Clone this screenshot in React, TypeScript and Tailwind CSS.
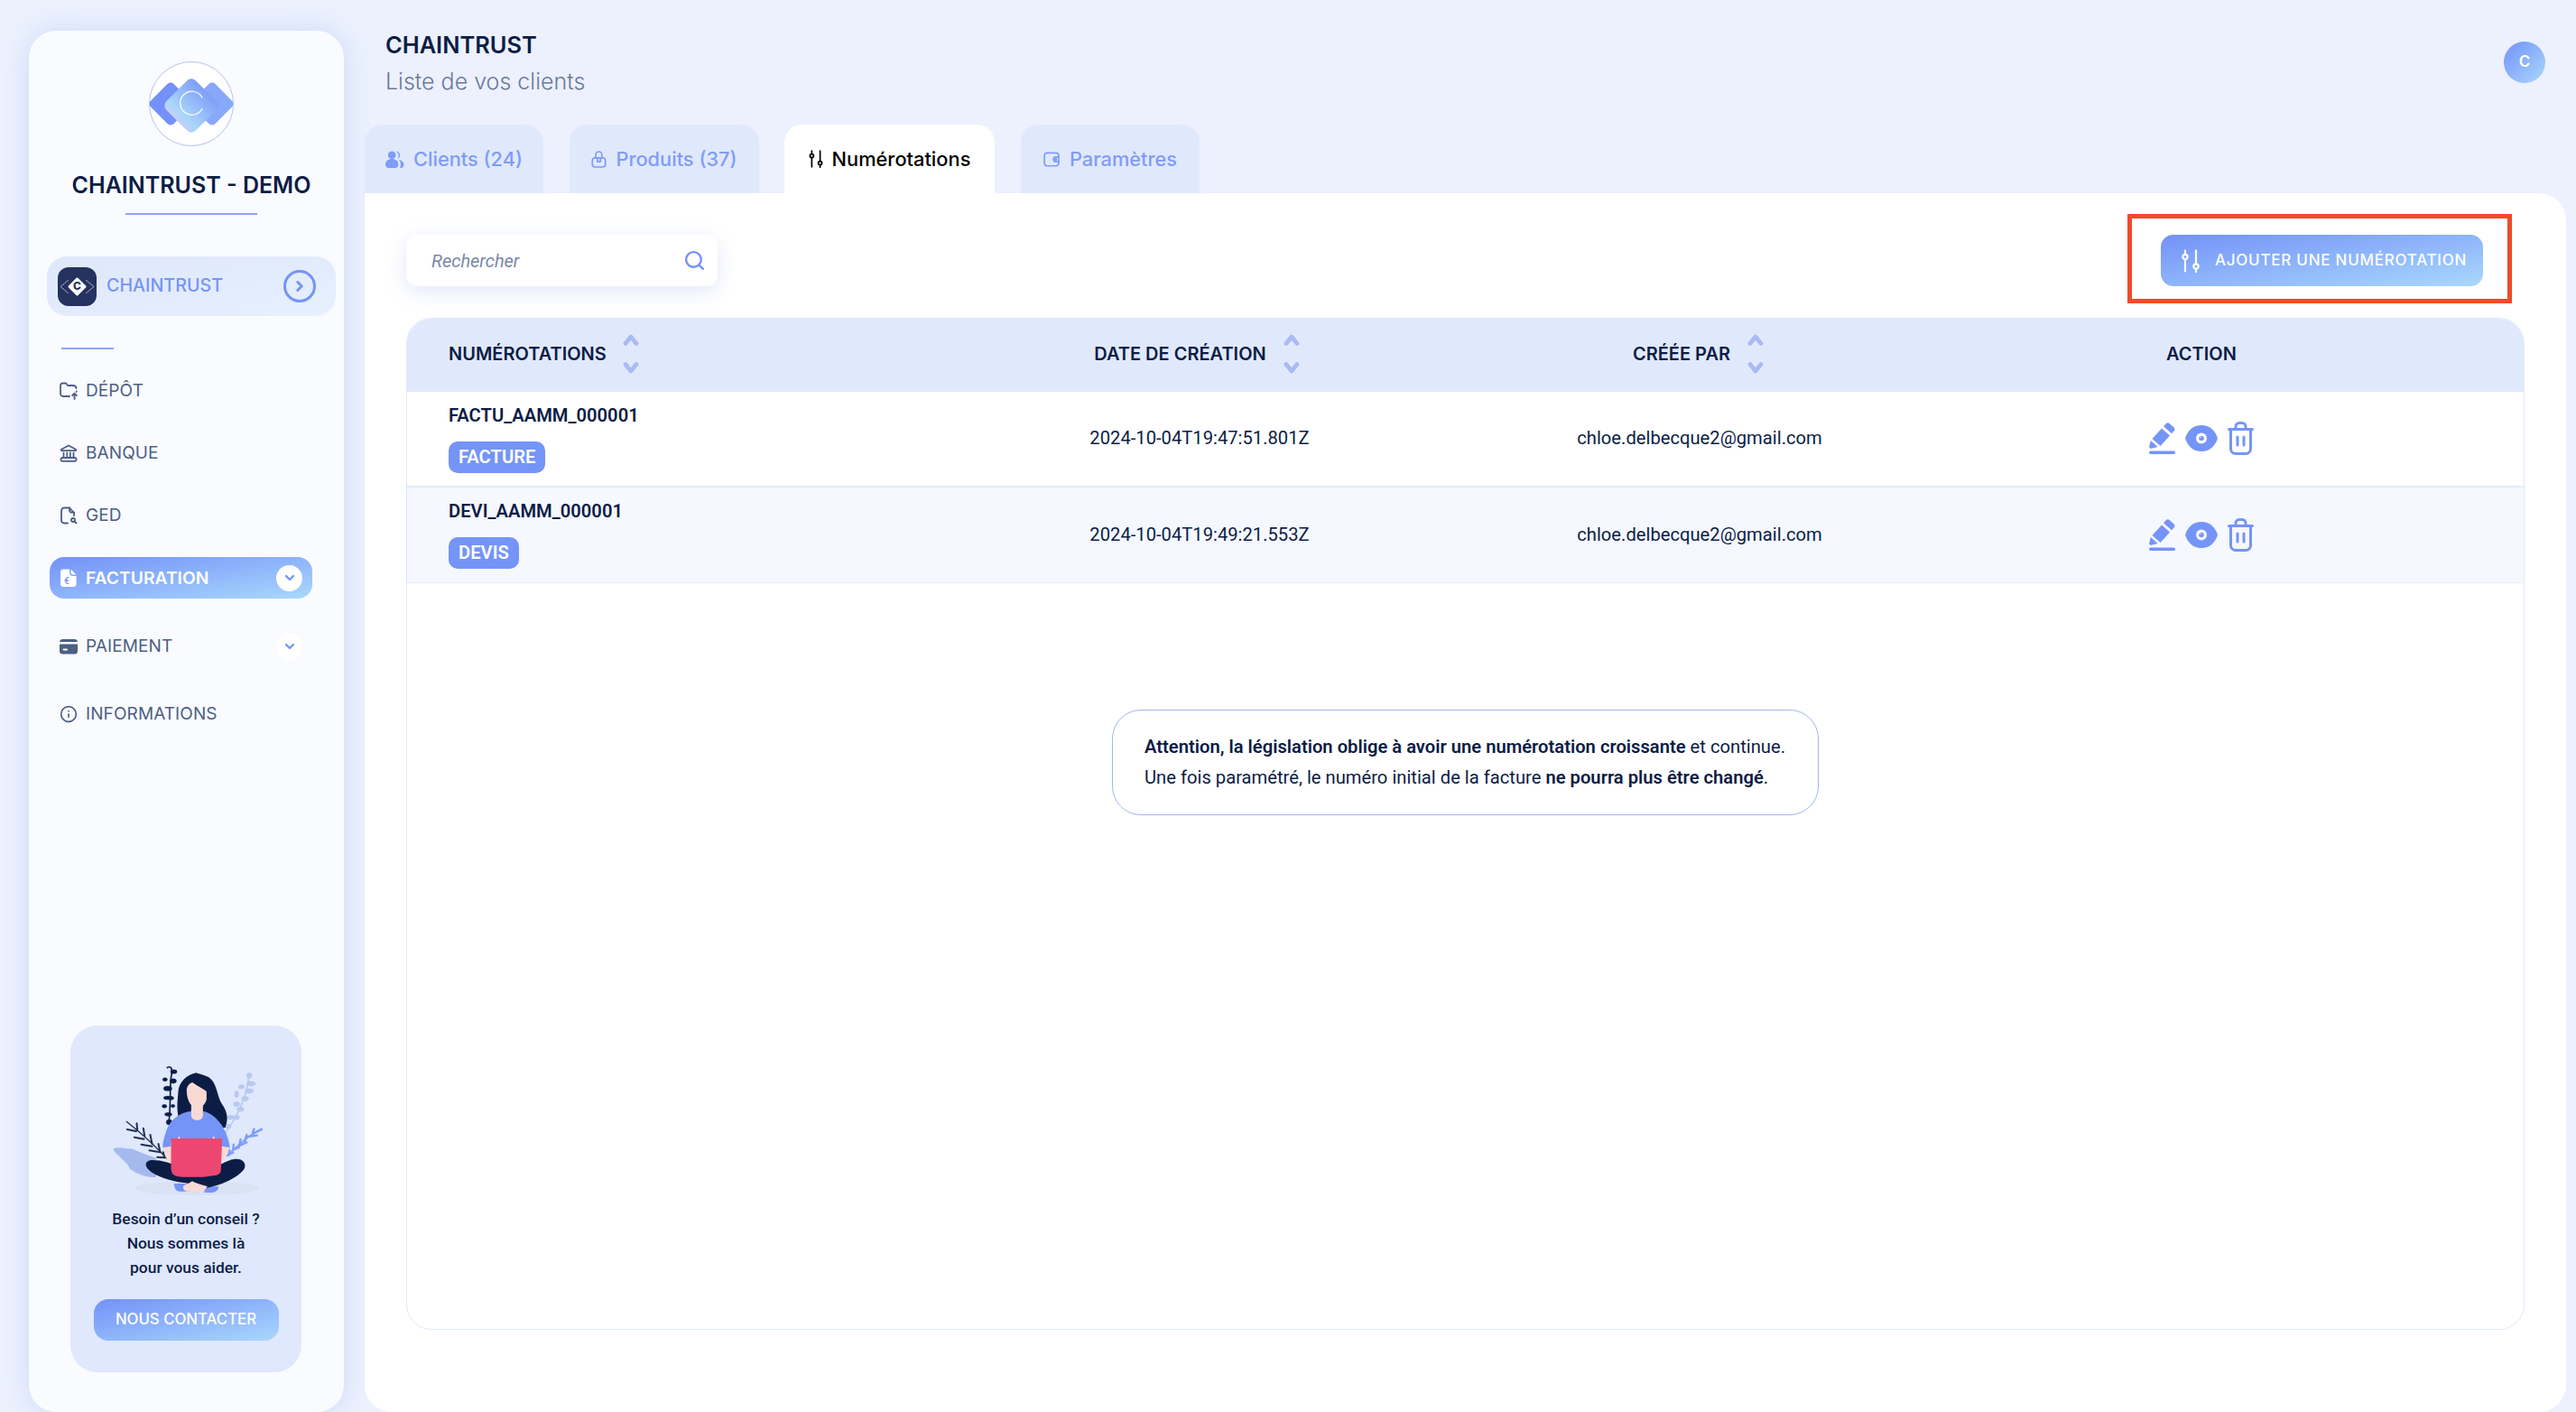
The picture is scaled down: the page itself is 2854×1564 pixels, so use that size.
import React from 'react';
import { ChevronRight, ChevronDown, Search, Info } from 'lucide-react';

const DISPLAY = "font-['Inter',sans-serif]";
const BODY = "font-['Roboto',sans-serif]";
const GRADIENT = 'bg-gradient-to-br from-[#7491f8] to-[#aad7fb]';

const SlidersIcon = ({ className }: { className?: string }) => (
  <svg viewBox="0 0 20 26" fill="none" stroke="currentColor" strokeLinecap="round" strokeWidth="2.2" className={className}>
    <path d="M4 1.500v4M4 11.500v13M16 1.500v15M16 22v3" />
    <circle cx="4" cy="8.500" r="2.600" />
    <circle cx="16" cy="19" r="2.600" />
  </svg>
);

const UsersIcon = ({ className }: { className?: string }) => (
  <svg viewBox="0 0 22 20" fill="currentColor" className={className}>
    <circle cx="7.500" cy="5" r="4.600" />
    <path d="M0 16c0-4 3-6.500 7.500-6.500S15 12 15 16c0 2.500-1.500 4-3.500 4h-8C1.500 20 0 18.500 0 16z" />
    <path d="M12.500.6a4.600 4.600 0 0 1 1.500 8.800 6 6 0 0 0-1.500-8.800zM15.500 10.500c3.500.5 6 2.500 6 5.800 0 2.200-1.200 3.700-3.500 3.700h-1.200c.7-1 1-2.400 1-4 0-2-.8-4-2.300-5.500z" />
  </svg>
);

const BoxIcon = ({ className }: { className?: string }) => (
  <svg viewBox="0 0 20 22" fill="none" stroke="currentColor" strokeWidth="2" strokeLinejoin="round" className={className}>
    <path d="M6 10V5a4 4 0 0 1 8 0v5" />
    <rect x="1.500" y="9" width="17" height="12" rx="3.500" />
    <path d="M8 9v5h4V9" />
  </svg>
);

const WalletIcon = ({ className }: { className?: string }) => (
  <svg viewBox="0 0 22 20" fill="none" stroke="currentColor" strokeWidth="2" className={className}>
    <rect x="1.200" y="1.500" width="18.500" height="17" rx="3.500" />
    <path d="M21 7h-5a3 3 0 0 0 0 6h5" />
    <circle cx="16" cy="10" r="1" fill="currentColor" />
  </svg>
);

const FolderIcon = () => (
  <svg viewBox="0 0 20 20" fill="none" stroke="currentColor" strokeWidth="1.800" strokeLinecap="round" strokeLinejoin="round" className="size-[20px]">
    <path d="M11 16H4a3 3 0 0 1-3-3V4a2.500 2.500 0 0 1 2.500-2.500H7l2 2.500h6a3.500 3.500 0 0 1 3.500 3.200" />
    <path d="M16.500 19v-6M14.200 15l2.300-2.300 2.300 2.300" />
    <path d="M18.700 10.500v.5" />
  </svg>
);

const BankIcon = () => (
  <svg viewBox="0 0 20 20" fill="none" stroke="currentColor" strokeWidth="1.800" strokeLinecap="round" strokeLinejoin="round" className="size-[20px]">
    <path d="M2 5.800 10 1.500l8 4.300v1.400H2z" />
    <path d="M4.500 9.500v5M8.300 9.500v5M11.800 9.500v5M15.500 9.500v5" />
    <rect x="1.500" y="15" width="17" height="3.800" rx="1.800" />
  </svg>
);

const FileSearchIcon = () => (
  <svg viewBox="0 0 20 20" fill="none" stroke="currentColor" strokeWidth="1.800" strokeLinecap="round" strokeLinejoin="round" className="size-[20px]">
    <path d="M9 18.500H5a3 3 0 0 1-3-3v-11a3 3 0 0 1 3-3h6l5 5.500v3" />
    <path d="M11 1.500v3a2 2 0 0 0 2 2h3" />
    <circle cx="15" cy="15" r="2" />
    <path d="m16.500 16.500 2 2" />
  </svg>
);

const InvoiceIcon = () => (
  <svg viewBox="0 0 18 20" className="h-[20px] w-[18px]">
    <path d="M3 .5h7V4a4 4 0 0 0 4 4h3.500v9a3 3 0 0 1-3 3H3a3 3 0 0 1-3-3V3.500a3 3 0 0 1 3-3z" fill="#fff" />
    <path d="M11.500.5 17.500 6.500H14a2.500 2.500 0 0 1-2.500-2.500z" fill="#fff" />
    <text x="4" y="17" fontSize="10" fontWeight="700" fill="#7f9df8" fontFamily="Roboto, sans-serif">€</text>
  </svg>
);

const CardIcon = () => (
  <svg viewBox="0 0 20 17" fill="#4d5f83" className="h-[17px] w-[20px]">
    <path d="M3.500 0h13A3.500 3.500 0 0 1 20 3H0A3.500 3.500 0 0 1 3.500 0z" />
    <path d="M0 5.500h20V13a3.500 3.500 0 0 1-3.500 3.500h-13A3.500 3.500 0 0 1 0 13z" />
    <rect x="3.500" y="10.500" width="5.500" height="2" rx="1" fill="#f9fbff" />
  </svg>
);

const PencilIcon = () => (
  <svg viewBox="0 0 29 37" fill="#7594f7" className="h-[37px] w-[29px]">
    <path d="M18.500 2.500a3 3 0 0 1 4.300-.2l4.500 4a3 3 0 0 1 .2 4.200l-2.500 2.800-9-8z" />
    <path d="M14 7.500l9 8-10.500 11.500-9-8z" />
    <path d="M1.800 21l7.800 7-7 1.700C1 30 0 29 .2 27.500z" />
    <rect x="0" y="32.500" width="29" height="3.500" rx="1.700" />
  </svg>
);

const EyeIcon = ({ bg }: { bg: string }) => (
  <svg viewBox="0 0 36 29" className="h-[29px] w-[36px]">
    <path d="M18 0c9 0 15.500 6 18 14.500C33.500 23 27 29 18 29S2.500 23 0 14.500C2.500 6 9 0 18 0z" fill="#7594f7" />
    <circle cx="18" cy="14.500" r="6" fill={bg} />
    <circle cx="18" cy="14.500" r="2.800" fill="#7594f7" />
    <circle cx="16.800" cy="13.300" r=".8" fill={bg} />
  </svg>
);

const TrashIcon = () => (
  <svg viewBox="0 0 29 37" fill="none" stroke="#7594f7" strokeWidth="3" strokeLinecap="round" strokeLinejoin="round" className="h-[37px] w-[29px]">
    <path d="M1.500 8.500h26" />
    <path d="M9 8V5.500a4 4 0 0 1 4-4h3a4 4 0 0 1 4 4V8" />
    <path d="M3.500 9v21a5.500 5.500 0 0 0 5.500 5.500h11a5.500 5.500 0 0 0 5.500-5.500V9" />
    <path d="M11 17v9M18 17v9" />
  </svg>
);

const SortArrows = () => (
  <svg viewBox="0 0 18 46" fill="none" stroke="#a9bbf0" strokeWidth="4.800" strokeLinecap="round" strokeLinejoin="round" className="h-[46px] w-[18px]">
    <path d="M3 11.500 9 4l6 7.500M3 34.500 9 42l6-7.500" />
  </svg>
);

const ChainTrustLogo = () => (
  <svg viewBox="0 0 94 94" className="size-[94px]">
    <defs>
      <linearGradient id="logoCenter" x1="0" y1="0" x2="0" y2="1">
        <stop offset="0" stopColor="#7f9ef8" />
        <stop offset="0.8" stopColor="#a9d6fb" />
        <stop offset="1" stopColor="#c3cff8" />
      </linearGradient>
    </defs>
    <circle cx="47" cy="47" r="46.500" fill="#fff" stroke="#9db2ee" strokeWidth="0.8" />
    <rect x="6" y="29" width="36" height="36" rx="5" transform="rotate(45 24 47)" fill="#7391f8" />
    <rect x="52" y="29" width="36" height="36" rx="5" transform="rotate(45 70 47)" fill="#88a8f9" />
    <rect x="24" y="26" width="46" height="46" rx="7" transform="rotate(45 47 49)" fill="url(#logoCenter)" />
    <path d="M59 40a13 13 0 1 0 0 12.500" fill="none" stroke="#fff" strokeWidth="1.200" strokeLinecap="round" />
  </svg>
);

const SmallLogo = () => (
  <div className="relative flex size-[43px] shrink-0 items-center justify-center rounded-[12px] bg-[#25315f]">
    <svg viewBox="0 0 43 43" className="absolute inset-0 size-[43px]">
      <path d="M12 14 3 21.500 12 29M31 14l9 7.500-9 7.500" fill="none" stroke="#c6cde0" strokeWidth="0.8" />
      <rect x="14" y="14" width="15" height="15" rx="1.500" transform="rotate(45 21.500 21.500)" fill="#fff" />
    </svg>
    <span className={`relative ${DISPLAY} text-[12px] font-extrabold text-[#25315f]`}>C</span>
  </div>
);

const Illustration = () => (
  <svg viewBox="200 170 530 450" className="h-[150px] w-[177px]">
    <ellipse cx="500" cy="587" rx="205" ry="23" fill="#d8e2f3" />
    <path d="M222 456c20-8 40 2 60 0 25 10 50 22 80 30 10 20 10 50 0 65-30 0-60-10-85-28-5-20-25-28-35-42-8-8-20-15-20-25z" fill="#a5b9ee" />
    {/* lilac plant */}
    <g fill="#b9c8f0" stroke="#b9c8f0">
      <path d="M672 215c-5 70-35 130-78 190" fill="none" strokeWidth="5" />
      <circle cx="674" cy="213" r="9" />
      <ellipse cx="680" cy="240" rx="14" ry="8" />
      <ellipse cx="674" cy="264" rx="14" ry="8" />
      <ellipse cx="648" cy="250" rx="10" ry="7" />
      <ellipse cx="632" cy="275" rx="7" ry="11" />
      <ellipse cx="660" cy="290" rx="12" ry="8" />
      <ellipse cx="632" cy="308" rx="11" ry="8" />
      <ellipse cx="645" cy="325" rx="12" ry="7" />
      <ellipse cx="612" cy="352" rx="12" ry="7" />
      <ellipse cx="632" cy="352" rx="10" ry="7" />
      <ellipse cx="602" cy="382" rx="12" ry="7" />
    </g>
    {/* blue fern */}
    <g stroke="#7f9cf8" strokeWidth="7" strokeLinecap="round" fill="none">
      <path d="M715 390c-40 20-80 55-115 90" strokeWidth="5" />
      <path d="M690 390l-8 25M715 392l-30 15M665 410l-6 22M700 412l-30 4M645 425l-4 22M622 442l-2 20M608 460l-2 18M665 435l-22 10M640 452l-20 8M620 470l-16 6" />
    </g>
    {/* dark plant */}
    <g fill="#0c1d45" stroke="#0c1d45">
      <path d="M400 188c12-10 22 0 14 30-5 50 0 100-8 155" fill="none" strokeWidth="5" />
      <ellipse cx="423" cy="200" rx="11" ry="7" />
      <ellipse cx="421" cy="231" rx="11" ry="8" />
      <ellipse cx="394" cy="226" rx="8" ry="6" />
      <ellipse cx="403" cy="256" rx="14" ry="8" />
      <ellipse cx="413" cy="288" rx="10" ry="6" />
      <ellipse cx="403" cy="287" rx="14" ry="6" />
      <ellipse cx="392" cy="315" rx="8" ry="6" />
      <ellipse cx="420" cy="314" rx="7" ry="5" />
      <ellipse cx="405" cy="342" rx="12" ry="6" />
      <ellipse cx="408" cy="368" rx="10" ry="9" />
    </g>
    {/* left fern */}
    <g stroke="#1f2e52" strokeWidth="6" strokeLinecap="round" fill="none">
      <path d="M266 366c50 40 100 85 135 124" strokeWidth="4" />
      <path d="M300 372l2 22M268 392l30 6M322 388l4 26M292 418l32 6M345 410l6 30M315 442l36 6M372 440l6 28M342 462l36 6M388 468l4 16M368 484l26 2" />
    </g>
    {/* hair */}
    <path d="M498 204c-30 6-58 30-60 62-2 28-6 50 0 82 20 22 140 40 156 38 10-25 10-50-12-80-14-24-16-62-34-80-14-14-30-14-50-22z" fill="#0c1d45" />
    {/* shirt */}
    <path d="M480 331c-40 6-70 30-82 66-6 20-12 36-12 54l26 4 4-30h164l6 32 24-4c-4-30-14-54-28-76-20-28-40-42-62-46z" fill="#7594f7" />
    {/* neck + face */}
    <path d="M481 300h39v46c0 20-39 20-39 0z" fill="#f9d9d4" />
    <path d="M466 262c0-16 14-26 20-26 12 10 28 16 46 30v26c-4 16-16 28-32 28s-34-20-34-58z" fill="#f9d9d4" />
    {/* arms */}
    <path d="M388 452l26-4 12 62-20-4c-8-16-14-34-18-54zM608 452l-26-4-8 50 16-4c8-14 14-26 18-42z" fill="#f9d9d4" />
    {/* shoes */}
    <path d="M424 572h50v26h-30c-14 0-20-12-20-26zM525 582h47c0 12-10 20-22 20h-25z" fill="#7594f7" />
    {/* legs */}
    <path d="M352 494c30 0 70 10 100 30 30 14 60 20 80 22l40-34c22-14 50-26 72-20 16 6 22 24 8 38-20 22-60 42-100 52-16 4-24 6-24 6-30-10-46-14-66-18-50-6-100-22-122-44-16-14-12-32 12-32z" fill="#0c1d45" />
    {/* feet */}
    <path d="M455 580c10-6 25-12 30-16 8 6 25 10 50 18-6 10-15 16-30 16h-35c-10 0-18-8-15-18z" fill="#f9d9d4" />
    {/* laptop */}
    <path d="M414 422h166c3 0 4 2 4 4l-4 100c0 8-6 16-16 18l-44 6h-60c-20 0-36-4-42-12-2-6-4-10-4-16z" fill="#ec4770" />
    <rect x="438" y="416" width="5" height="7" fill="#f9d9d4" />
    <rect x="553" y="416" width="5" height="7" fill="#f9d9d4" />
  </svg>
);

const NavItem = ({ icon, label, chevron }: { icon: React.ReactNode; label: string; chevron?: boolean }) => (
  <div className="ml-[12px] flex h-[46px] w-[291px] items-center pl-[11px] pr-[11px] text-[#4d5f83]">
    <span className="flex w-[20px] justify-center">{icon}</span>
    <span className={`ml-[9px] ${DISPLAY} text-[19px] font-normal tracking-[0.1px]`}>{label}</span>
    {chevron && (
      <span className="ml-auto flex size-[29px] items-center justify-center rounded-full bg-white">
        <ChevronDown className="size-[16px] text-[#7594f7]" strokeWidth={3.500} />
      </span>
    )}
  </div>
);

const Tab = ({ icon, label, active, className }: { icon: React.ReactNode; label: string; active?: boolean; className: string }) => (
  <div
    className={`flex h-[76px] items-center justify-center gap-[10px] rounded-t-[20px] ${DISPLAY} text-[21.800px] font-medium ${
      active ? 'bg-white text-black' : 'bg-[#e0e9fc] text-[#7f9cf7]'
    } ${className}`}
  >
    {icon}
    <span>{label}</span>
  </div>
);

const rows = [
  { code: 'FACTU_AAMM_000001', type: 'FACTURE', date: '2024-10-04T19:47:51.801Z', bg: 'bg-white', eye: '#ffffff', border: 'border-b-2' },
  { code: 'DEVI_AAMM_000001', type: 'DEVIS', date: '2024-10-04T19:49:21.553Z', bg: 'bg-[#f5f8ff]', eye: '#f5f8ff', border: 'border-b' },
];

const COLS = 'grid grid-cols-[550px_656px_452px_660px_1fr] items-center';

export default function App() {
  return (
    <div className={`flex h-[1564px] w-[2854px] overflow-hidden bg-[#ecf1fd] ${BODY}`}>
      {/* Sidebar */}
      <aside className="ml-[32px] mt-[34px] flex h-[1530px] w-[349px] shrink-0 flex-col items-center rounded-[30px] bg-[#f9fbff] pl-[11px] shadow-[0_0_28px_rgba(200,213,250,0.85)]">
        <div className="mt-[34px]">
          <ChainTrustLogo />
        </div>
        <h2 className={`mt-[26px] ${DISPLAY} text-[25px] font-semibold leading-[34px] text-[#0c1d45]`}>CHAINTRUST - DEMO</h2>
        <div className="mt-[14px] h-[2px] w-[146px] bg-[#8fa7ec]" />
        <div className="mt-[46px] flex h-[66px] w-[320px] shrink-0 items-center rounded-[22px] bg-gradient-to-br from-[#dfe7fb] to-[#e6f0fe] pl-[12px] pr-[22px]">
          <SmallLogo />
          <span className={`ml-[11px] ${DISPLAY} text-[19.700px] font-medium text-[#7594f7]`}>CHAINTRUST</span>
          <span className="ml-auto flex size-[36px] items-center justify-center rounded-full border-[3.500px] border-[#7594f7]">
            <ChevronRight className="size-[18px] text-[#7594f7]" strokeWidth={4} />
          </span>
        </div>
        <div className="ml-[25px] mt-[35px] h-[2px] w-[58px] self-start bg-[#8fa7ec]" />
        <div className="mt-[23px] flex flex-col self-start">
          <NavItem icon={<FolderIcon />} label="DÉPÔT" />
          <div className="h-[23px]" />
          <NavItem icon={<BankIcon />} label="BANQUE" />
          <div className="h-[23px]" />
          <NavItem icon={<FileSearchIcon />} label="GED" />
          <div className="h-[23px]" />
          <div className={`ml-[12px] flex h-[46px] w-[291px] items-center rounded-[16px] pl-[11px] pr-[11px] text-white ${GRADIENT}`}>
            <span className="flex w-[20px] justify-center"><InvoiceIcon /></span>
            <span className={`ml-[9px] ${DISPLAY} text-[19.300px] font-semibold`}>FACTURATION</span>
            <span className="ml-auto flex size-[29px] items-center justify-center rounded-full bg-white">
              <ChevronDown className="size-[16px] text-[#7594f7]" strokeWidth={3.500} />
            </span>
          </div>
          <div className="h-[30px]" />
          <NavItem icon={<CardIcon />} label="PAIEMENT" chevron />
          <div className="h-[29px]" />
          <NavItem icon={<Info className="size-[20px]" strokeWidth={2} />} label="INFORMATIONS" />
        </div>
        <div className="mb-[44px] ml-[35px] mt-auto flex h-[384px] w-[256px] flex-col items-center self-start rounded-[30px] bg-[#dfe8fc]">
          <div className="mt-[41px] flex justify-center">
            <Illustration />
          </div>
          <p className="mt-[10px] text-center text-[17.400px] font-medium leading-[27px] text-[#0c1d45]">
            Besoin d’un conseil ?
            <br />
            Nous sommes là
            <br />
            pour vous aider.
          </p>
          <button className={`mt-[21px] h-[46px] w-[205px] rounded-[16px] ${DISPLAY} text-[16.800px] font-medium text-white ${GRADIENT}`}>NOUS CONTACTER</button>
        </div>
      </aside>

      {/* Main */}
      <main className="ml-[23px] flex min-w-0 flex-1 flex-col pr-[11px]">
        <header className="relative h-[138px] pl-[23px] pt-[33px]">
          <h1 className={`${DISPLAY} text-[25.400px] font-semibold leading-[34px] text-[#0c1d45]`}>CHAINTRUST</h1>
          <p className={`mt-[6px] ${DISPLAY} text-[25px] font-light leading-[34px] text-[#6b7a99]`}>Liste de vos clients</p>
          <div className={`absolute right-[23px] top-[46px] flex size-[46px] items-center justify-center rounded-full ${DISPLAY} text-[17px] font-semibold text-white ${GRADIENT}`}>C</div>
        </header>

        <nav className="flex h-[76px] items-center">
          <Tab icon={<UsersIcon className="h-[19px] w-[21px]" />} label="Clients (24)" className="w-[198px]" />
          <Tab icon={<BoxIcon className="h-[19px] w-[17px]" />} label="Produits (37)" className="ml-[29px] w-[210px]" />
          <Tab icon={<SlidersIcon className="h-[20px] w-[16px]" />} label="Numérotations" active className="ml-[28px] w-[233px]" />
          <Tab icon={<WalletIcon className="h-[17px] w-[19px]" />} label="Paramètres" className="ml-[29px] w-[198px]" />
        </nav>

        <section className="flex h-[1350px] flex-1 flex-col rounded-b-[30px] rounded-tr-[30px] bg-white px-[46px] pt-[46px]">
          <div className="flex h-[57px] items-start justify-between">
            <div className="flex h-[57px] w-[345px] items-center justify-between rounded-[12px] bg-white pl-[28px] pr-[13px] shadow-[0_6px_22px_rgba(190,205,245,0.45)]">
              <span className="text-[20px] italic text-[#7a88a8]">Rechercher</span>
              <Search className="size-[25px] text-[#7594f7]" strokeWidth={2.300} />
            </div>
            <div className="relative mr-[46px]">
              <button className={`flex h-[57px] w-[357px] items-center rounded-[14px] pl-[23px] ${GRADIENT}`}>
                <SlidersIcon className="h-[26px] w-[20px] text-white" />
                <span className={`ml-[17px] ${DISPLAY} text-[17px] font-medium tracking-[0.750px] text-white`}>AJOUTER UNE NUMÉROTATION</span>
              </button>
              <div className="absolute -bottom-[19px] -left-[37px] -right-[32px] -top-[23px] border-[5px] border-[#f04a2a]" />
            </div>
          </div>

          <div className="mt-[35px] flex h-[1121px] flex-col overflow-hidden rounded-[28px] border-[1.500px] border-[#e0e8fc]">
            <div className={`h-[80.500px] shrink-0 bg-[#e0e9fc] pb-[3px] ${COLS} ${DISPLAY} text-[20px] font-semibold text-[#0c1d45]`}>
              <div className="flex items-center pl-[46px]">
                <span>NUMÉROTATIONS</span>
                <span className="ml-[18px]"><SortArrows /></span>
              </div>
              <div className="flex items-center justify-center pr-[6px]">
                <span>DATE DE CRÉATION</span>
                <span className="ml-[19px]"><SortArrows /></span>
              </div>
              <div className="flex items-center justify-center pr-[3px]">
                <span>CRÉÉE PAR</span>
                <span className="ml-[19px]"><SortArrows /></span>
              </div>
              <div className="flex items-center justify-center">ACTION</div>
            </div>
            {rows.map((r) => (
              <div key={r.code} className={`h-[106px] shrink-0 ${r.bg} ${r.border} border-[#e3ebfa] ${COLS} text-[20.200px] text-[#0c1d45]`}>
                <div className="flex flex-col items-start gap-[14px] pb-[3px] pl-[46px]">
                  <span className="text-[20.200px] font-semibold leading-[30px]">{r.code}</span>
                  <span className="rounded-[10px] bg-[#7594f7] px-[11px] text-[20.200px] font-semibold leading-[35px] text-white">{r.type}</span>
                </div>
                <div className="text-center">{r.date}</div>
                <div className="text-center">chloe.delbecque2@gmail.com</div>
                <div className="flex items-center justify-center gap-[11px]">
                  <PencilIcon />
                  <EyeIcon bg={r.eye} />
                  <TrashIcon />
                </div>
              </div>
            ))}
            <div className="flex flex-1 items-start justify-center pt-[140px]">
              <div className="flex h-[117px] w-[783px] flex-col justify-center rounded-[32px] border-[1.500px] border-[#a2b6f0] pl-[35px] text-[20.200px] leading-[34px] text-[#0c1d45]">
                <p><b className="font-semibold">Attention, la législation oblige à avoir une numérotation croissante</b> et continue.</p>
                <p>Une fois paramétré, le numéro initial de la facture <b className="font-semibold">ne pourra plus être changé</b>.</p>
              </div>
            </div>
          </div>
        </section>
      </main>
    </div>
  );
}
